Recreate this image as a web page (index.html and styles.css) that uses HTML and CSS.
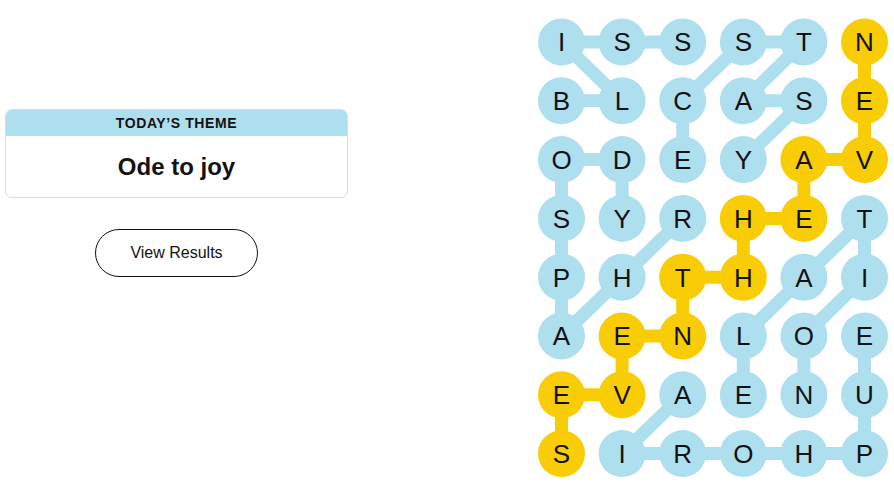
FILE: index.html
```html
<!DOCTYPE html>
<html lang="en">
<head>
<meta charset="utf-8">
<title>Strands</title>
<link rel="stylesheet" href="styles.css">
</head>
<body>
<main class="page">
  <section class="side">
    <div class="theme-card">
      <div class="theme-head">TODAY’S THEME</div>
      <div class="theme-body">Ode to joy</div>
    </div>
    <button class="results-btn" type="button">View Results</button>
  </section>
  <svg class="board" width="360" height="470" viewBox="0 0 360 470" aria-label="Strands board">
    <g class="links blue">
      <polyline points="27.5,86.8 88.1,86.8 27.5,28 88.1,28 148.7,28"/>
      <polyline points="148.7,145.6 148.7,86.8 209.3,28 269.9,28 209.3,86.8 269.9,86.8 209.3,145.6"/>
      <polyline points="148.7,204.4 88.1,263.2 27.5,322 27.5,263.2 27.5,204.4 27.5,145.6 88.1,145.6 88.1,204.4"/>
      <polyline points="209.3,380.8 209.3,322 269.9,263.2 330.5,204.4 330.5,263.2 269.9,322 269.9,380.8"/>
      <polyline points="330.5,322 330.5,380.8 330.5,439.6 269.9,439.6 209.3,439.6 148.7,439.6 88.1,439.6 148.7,380.8"/>
    </g>
    <g class="links gold">
      <polyline points="330.5,28 330.5,86.8 330.5,145.6 269.9,145.6 269.9,204.4 209.3,204.4 209.3,263.2 148.7,263.2 148.7,322 88.1,322 88.1,380.8 27.5,380.8 27.5,439.6"/>
    </g>
    <g class="dots blue">
      <circle cx="27.5" cy="28" r="23.5"/><circle cx="88.1" cy="28" r="23.5"/><circle cx="148.7" cy="28" r="23.5"/><circle cx="209.3" cy="28" r="23.5"/><circle cx="269.9" cy="28" r="23.5"/>
      <circle cx="27.5" cy="86.8" r="23.5"/><circle cx="88.1" cy="86.8" r="23.5"/><circle cx="148.7" cy="86.8" r="23.5"/><circle cx="209.3" cy="86.8" r="23.5"/><circle cx="269.9" cy="86.8" r="23.5"/>
      <circle cx="27.5" cy="145.6" r="23.5"/><circle cx="88.1" cy="145.6" r="23.5"/><circle cx="148.7" cy="145.6" r="23.5"/><circle cx="209.3" cy="145.6" r="23.5"/>
      <circle cx="27.5" cy="204.4" r="23.5"/><circle cx="88.1" cy="204.4" r="23.5"/><circle cx="148.7" cy="204.4" r="23.5"/><circle cx="330.5" cy="204.4" r="23.5"/>
      <circle cx="27.5" cy="263.2" r="23.5"/><circle cx="88.1" cy="263.2" r="23.5"/><circle cx="269.9" cy="263.2" r="23.5"/><circle cx="330.5" cy="263.2" r="23.5"/>
      <circle cx="27.5" cy="322" r="23.5"/><circle cx="209.3" cy="322" r="23.5"/><circle cx="269.9" cy="322" r="23.5"/><circle cx="330.5" cy="322" r="23.5"/>
      <circle cx="148.7" cy="380.8" r="23.5"/><circle cx="209.3" cy="380.8" r="23.5"/><circle cx="269.9" cy="380.8" r="23.5"/><circle cx="330.5" cy="380.8" r="23.5"/>
      <circle cx="88.1" cy="439.6" r="23.5"/><circle cx="148.7" cy="439.6" r="23.5"/><circle cx="209.3" cy="439.6" r="23.5"/><circle cx="269.9" cy="439.6" r="23.5"/><circle cx="330.5" cy="439.6" r="23.5"/>
    </g>
    <g class="dots gold">
      <circle cx="330.5" cy="28" r="23.5"/><circle cx="330.5" cy="86.8" r="23.5"/><circle cx="330.5" cy="145.6" r="23.5"/><circle cx="269.9" cy="145.6" r="23.5"/>
      <circle cx="269.9" cy="204.4" r="23.5"/><circle cx="209.3" cy="204.4" r="23.5"/><circle cx="209.3" cy="263.2" r="23.5"/><circle cx="148.7" cy="263.2" r="23.5"/>
      <circle cx="148.7" cy="322" r="23.5"/><circle cx="88.1" cy="322" r="23.5"/><circle cx="88.1" cy="380.8" r="23.5"/><circle cx="27.5" cy="380.8" r="23.5"/><circle cx="27.5" cy="439.6" r="23.5"/>
    </g>
    <g class="letters">
      <text x="27.5" y="37.3">I</text><text x="88.1" y="37.3">S</text><text x="148.7" y="37.3">S</text><text x="209.3" y="37.3">S</text><text x="269.9" y="37.3">T</text><text x="330.5" y="37.3">N</text>
      <text x="27.5" y="96.1">B</text><text x="88.1" y="96.1">L</text><text x="148.7" y="96.1">C</text><text x="209.3" y="96.1">A</text><text x="269.9" y="96.1">S</text><text x="330.5" y="96.1">E</text>
      <text x="27.5" y="154.9">O</text><text x="88.1" y="154.9">D</text><text x="148.7" y="154.9">E</text><text x="209.3" y="154.9">Y</text><text x="269.9" y="154.9">A</text><text x="330.5" y="154.9">V</text>
      <text x="27.5" y="213.7">S</text><text x="88.1" y="213.7">Y</text><text x="148.7" y="213.7">R</text><text x="209.3" y="213.7">H</text><text x="269.9" y="213.7">E</text><text x="330.5" y="213.7">T</text>
      <text x="27.5" y="272.5">P</text><text x="88.1" y="272.5">H</text><text x="148.7" y="272.5">T</text><text x="209.3" y="272.5">H</text><text x="269.9" y="272.5">A</text><text x="330.5" y="272.5">I</text>
      <text x="27.5" y="331.3">A</text><text x="88.1" y="331.3">E</text><text x="148.7" y="331.3">N</text><text x="209.3" y="331.3">L</text><text x="269.9" y="331.3">O</text><text x="330.5" y="331.3">E</text>
      <text x="27.5" y="390.1">E</text><text x="88.1" y="390.1">V</text><text x="148.7" y="390.1">A</text><text x="209.3" y="390.1">E</text><text x="269.9" y="390.1">N</text><text x="330.5" y="390.1">U</text>
      <text x="27.5" y="448.9">S</text><text x="88.1" y="448.9">I</text><text x="148.7" y="448.9">R</text><text x="209.3" y="448.9">O</text><text x="269.9" y="448.9">H</text><text x="330.5" y="448.9">P</text>
    </g>
  </svg>
</main>
</body>
</html>
```
FILE: styles.css
```css
* { box-sizing: border-box; }
html, body {
  margin: 0;
  padding: 0;
  background: #ffffff;
  font-family: "Liberation Sans", Arial, sans-serif;
  color: #121212;
}
.page {
  display: flex;
  align-items: flex-start;
  width: 894px;
  height: 503px;
  overflow: hidden;
}
.side {
  width: 348px;
  padding: 109px 0 0 5px;
  display: flex;
  flex-direction: column;
  align-items: center;
}
.theme-card {
  width: 343px;
  border: 1px solid #dcdcdc;
  border-radius: 7px;
  overflow: hidden;
  background: #fff;
}
.theme-head {
  height: 26px;
  background: #aedfee;
  display: flex;
  align-items: center;
  justify-content: center;
  font-size: 14px;
  font-weight: 600;
  letter-spacing: 0.6px;
  color: #121212;
}
.theme-body {
  height: 61px;
  display: flex;
  align-items: center;
  justify-content: center;
  font-size: 24px;
  font-weight: 700;
  color: #121212;
}
.results-btn {
  margin-top: 31px;
  width: 163px;
  height: 48px;
  border: 1px solid #121212;
  border-radius: 24px;
  background: #fff;
  font-family: "Liberation Sans", Arial, sans-serif;
  font-size: 16px;
  color: #121212;
  padding: 0;
  cursor: pointer;
}
.board {
  display: block;
  margin: 14px 0 0 auto;
  flex: none;
}
.links polyline {
  fill: none;
  stroke-width: 13;
  stroke-linejoin: round;
  stroke-linecap: round;
}
.links.blue polyline { stroke: #aedfee; }
.links.gold polyline { stroke: #f8cd05; }
.dots.blue circle { fill: #aedfee; }
.dots.gold circle { fill: #f8cd05; }
.letters text {
  font-family: "Liberation Sans", Arial, sans-serif;
  font-size: 26px;
  fill: #121212;
  text-anchor: middle;
}
```
